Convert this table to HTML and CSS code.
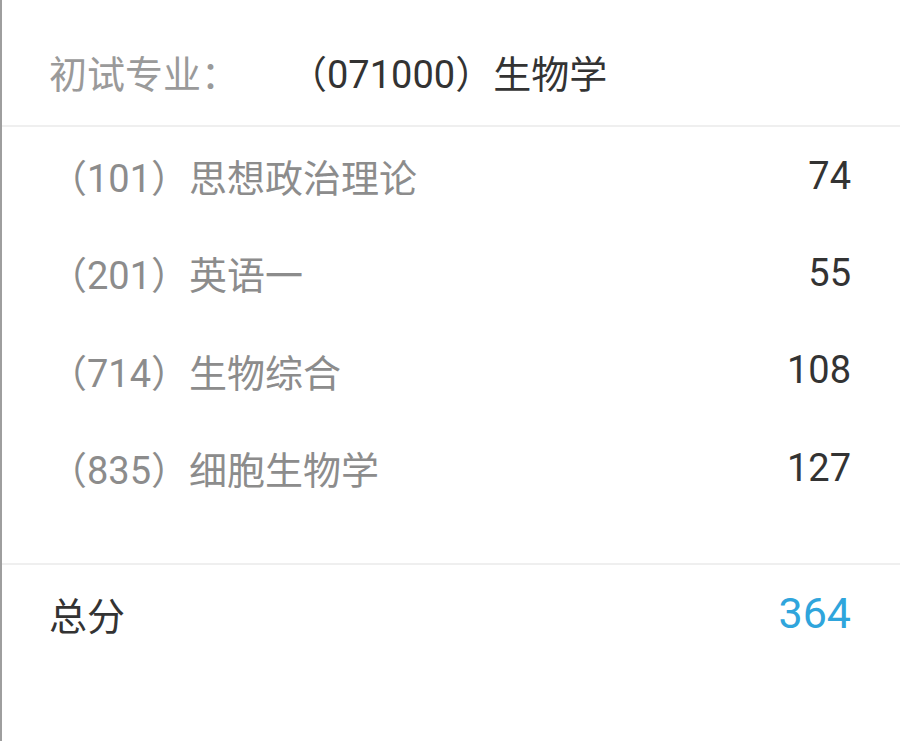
FILE: index.html
```html
<!DOCTYPE html>
<html lang="zh-CN">
<head>
<meta charset="utf-8">
<link rel="stylesheet" href="styles.css">
</head>
<body>
<div class="card">
  <div class="header">
    <span class="h-label">初试专业：</span>
    <span class="h-value">（071000）生物学</span>
  </div>
  <div class="rows">
    <div class="row"><span class="subj">（101）思想政治理论</span><span class="score">74</span></div>
    <div class="row"><span class="subj">（201）英语一</span><span class="score">55</span></div>
    <div class="row"><span class="subj">（714）生物综合</span><span class="score">108</span></div>
    <div class="row"><span class="subj">（835）细胞生物学</span><span class="score">127</span></div>
  </div>
  <div class="total">
    <span class="t-label">总分</span>
    <span class="t-value">364</span>
  </div>
</div>
</body>
</html>
```

FILE: styles.css
```css
html, body {
  margin: 0;
  padding: 0;
  background: #ffffff;
}
body {
  font-family: "Roboto", "Noto Sans CJK SC", sans-serif;
  font-size: 38px;
  width: 900px;
  height: 741px;
  overflow: hidden;
}
.card {
  box-sizing: border-box;
  height: 741px;
  border-left: 2px solid #9e9e9e;
  display: flex;
  flex-direction: column;
}
.header {
  height: 127px;
  display: flex;
  align-items: center;
  padding-left: 47px;
  padding-top: 18px;
  box-sizing: border-box;
  border-bottom: 2px solid #efefef;
}
.h-label {
  color: #9a9a9a;
  width: 240px;
}
.h-value {
  color: #333333;
}
.rows {
  display: flex;
  flex-direction: column;
  padding-bottom: 47px;
  border-bottom: 2px solid #efefef;
}
.row {
  height: 97.3px;
  display: flex;
  align-items: center;
  justify-content: space-between;
  padding: 0 49px 0 47px;
}
.subj {
  color: #8c8c8c;
}
.score {
  color: #333333;
}
.total {
  height: 96px;
  display: flex;
  align-items: center;
  justify-content: space-between;
  padding: 0 49px 0 47px;
}
.t-label {
  color: #333333;
}
.t-value {
  color: #2fa5dc;
  font-size: 43px;
}
```
